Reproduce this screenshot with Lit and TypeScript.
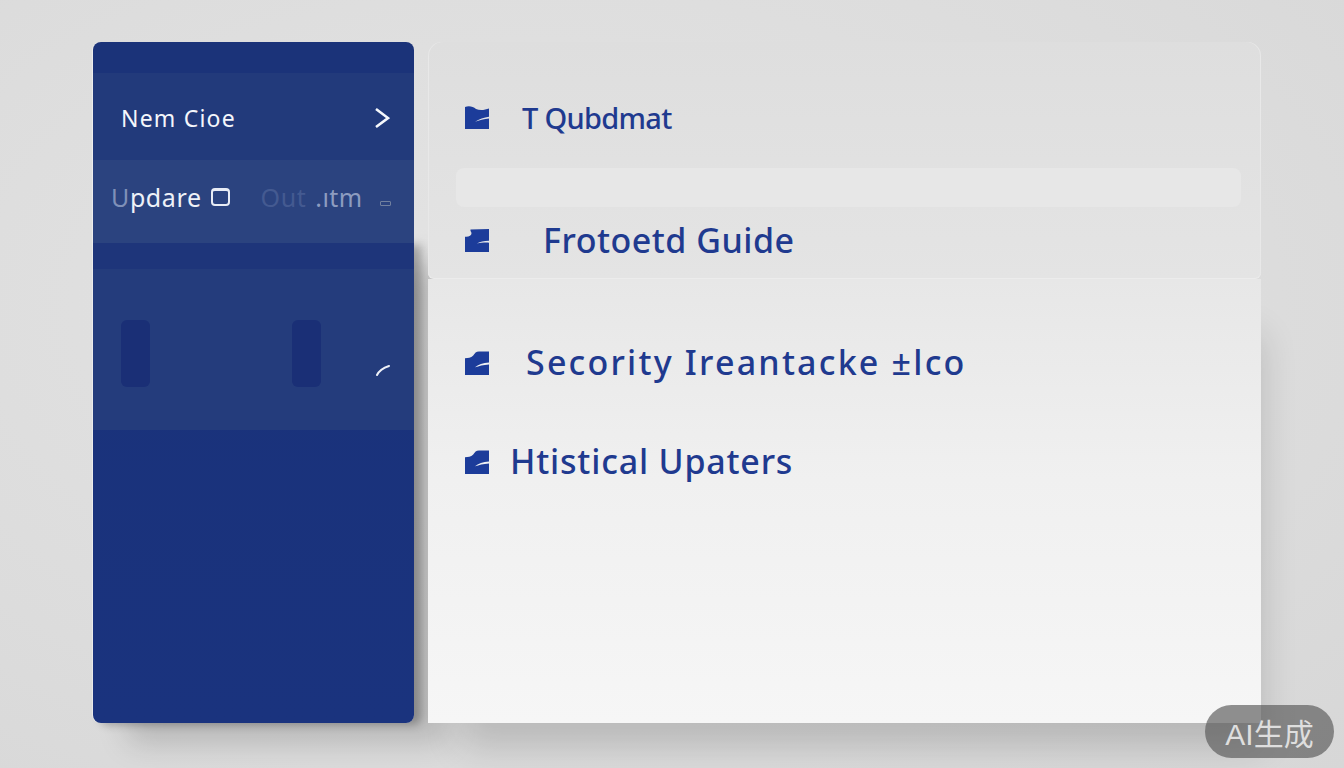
import { LitElement, html, css, svg } from 'lit';
import { customElement } from 'lit/decorators.js';

const ICONS = {
  wave: svg`<path d="M0 1C4 -.5 8 .5 11 3C15 5 20 4 24 2.500V24H0Z" fill="#1c3c9a"/><path d="M10 16.500C14 13.500 19 12 24 11.200V13C19 13.500 14 15 10 16.500Z" fill="#e2e4e8"/>`,
  notch: svg`<path d="M0 8C3.500 8.500 6.500 7 6.500 4.500C6.500 3 5 2 5.500 .5L24 0V24H0Z" fill="#1c3c9a"/><path d="M12 15C15 13 19 12.500 24 12.300V14.200C19 14 15 14.500 12 15Z" fill="#e6e8ec"/>`,
  tab: svg`<path d="M0 7.500C3 7.500 6 7 8 5C10 2 11 .5 14 .5H24V25H0Z" fill="#1c3c9a"/><path d="M10 17C13 14 18 12.500 24 12V14C18 14.500 14 15.500 10 17Z" fill="#eef0f3"/>`,
};

type IconName = keyof typeof ICONS;

@customElement('app-root')
export class AppRoot extends LitElement {
  static styles = css`
    :host {
      display: block;
      width: 1344px;
      height: 768px;
      overflow: hidden;
      font-family: 'Noto Sans', sans-serif;
    }
    .stage {
      position: relative;
      box-sizing: border-box;
      width: 1344px;
      height: 768px;
      padding: 42px 83px 45px 93px;
      display: flex;
      gap: 14px;
      background:
        radial-gradient(ellipse at 40% 40%, #e4e4e4 0%, #dcdcdc 65%, #d7d7d7 100%);
    }

    /* sidebar */
    .sidebar {
      width: 321px;
      flex: none;
      display: flex;
      flex-direction: column;
      border-radius: 8px;
      box-shadow: -1px 0 0 rgba(255, 255, 255, 0.45);
    }
    .strip-top {
      height: 31px;
      flex: none;
      border-radius: 8px 8px 0 0;
      background: #1b3379;
    }
    .menu-row {
      flex: none;
      display: flex;
      align-items: center;
      justify-content: space-between;
      box-sizing: border-box;
      position: relative;
      z-index: 1;
    }
    .row-new {
      height: 87px;
      padding: 2px 24px 0 28px;
      background: #223a7b;
      color: #f4f6fb;
      font-size: 23px;
      letter-spacing: 1.200px;
    }
    .row-update {
      height: 83px;
      padding: 0 23px 9px 18px;
      background: #2b437f;
      color: #eef1f8;
      font-size: 25px;
      letter-spacing: 0.600px;
    }
    .group {
      display: flex;
      align-items: center;
    }
    .dim {
      color: #7f90b8;
    }
    .faint {
      color: #445a91;
    }
    .mid {
      margin-left: 2px;
      color: #8d9cc0;
      letter-spacing: 0.400px;
    }
    .out {
      margin-left: 31px;
    }
    .box {
      width: 19px;
      height: 18px;
      margin-left: 9px;
      box-sizing: border-box;
      border: 2.500px solid #e8ecf5;
      border-top-width: 3px;
      border-radius: 4px;
    }
    .mini-box {
      width: 11px;
      height: 5px;
      margin: 13px 0 0 4px;
      box-sizing: border-box;
      border: 1px solid #71809f;
      border-radius: 1px;
    }
    .sidebar-lower {
      flex: 1;
      display: flex;
      flex-direction: column;
      border-radius: 0 0 8px 8px;
      background: linear-gradient(#1a327a, #1a337e);
      box-shadow:
        7px 2px 9px rgba(0, 0, 0, 0.26),
        34px 20px 30px rgba(0, 0, 0, 0.17);
    }
    .strip-mid {
      height: 26px;
      flex: none;
      background: #1e357a;
    }
    .panel {
      height: 161px;
      flex: none;
      box-sizing: border-box;
      padding: 51px 0 0 28px;
      display: flex;
      gap: 142px;
      position: relative;
      background: #243c7c;
    }
    .slot {
      width: 29px;
      height: 67px;
      border-radius: 6px;
      background: #1a2f76;
    }
    .tick {
      position: absolute;
      left: 283px;
      top: 96px;
    }

    /* main area */
    .main {
      flex: 1;
      display: flex;
      flex-direction: column;
      min-width: 0;
    }
    .top-card {
      height: 237px;
      flex: none;
      position: relative;
      z-index: 1;
      box-sizing: border-box;
      padding: 52px 20px 0 37px;
      border-radius: 14px 14px 6px 6px;
      background: linear-gradient(#dedede, #e4e4e4);
      border-bottom: 1px solid #ececec;
      box-shadow: inset -1px 0 0 #e8e8e8, inset 1px 0 0 #e8e8e8;
    }
    .lower {
      flex: 1;
      box-sizing: border-box;
      padding: 60px 20px 0 37px;
      background: linear-gradient(#e7e7e7, #f0f0f0 45%, #f6f6f6);
      box-shadow: 16px 40px 34px -16px rgba(0, 0, 0, 0.16);
    }
    .highlight {
      height: 39px;
      margin: 26px 0 10px -9px;
      border-radius: 8px;
      background: #e7e7e7;
    }
    .entry {
      display: flex;
      align-items: center;
      height: 48px;
      color: #1f3a8f;
      font-size: 34px;
      font-weight: 500;
    }
    .entry svg {
      width: 24px;
      height: 24px;
      flex: none;
    }
    .entry span {
      position: relative;
      top: -1px;
    }
    .entry.first {
      font-size: 29px;
      letter-spacing: -0.700px;
    }
    .entry.indent-first span {
      margin-left: 33px;
    }
    .entry.indent-second span {
      margin-left: 54px;
      letter-spacing: 0.500px;
    }
    .entry.indent-third span {
      margin-left: 37px;
      letter-spacing: 2.200px;
    }
    .entry.indent-fourth {
      margin-top: 51px;
    }
    .entry.indent-fourth span {
      margin-left: 21px;
      letter-spacing: 0.800px;
    }
    .badge {
      position: absolute;
      left: 1205px;
      top: 705px;
      width: 129px;
      height: 53px;
      display: flex;
      align-items: center;
      justify-content: center;
      border-radius: 27px;
      background: rgba(88, 88, 88, 0.66);
      color: #dedede;
      font-size: 30px;
      font-family: 'Liberation Sans', 'Noto Sans CJK SC', sans-serif;
    }
  `;

  private entry(icon: IconName, label: string, cls: string) {
    return html`
      <div class="entry ${cls}">
        <svg viewBox="0 0 24 25" preserveAspectRatio="none" aria-hidden="true">${ICONS[icon]}</svg>
        <span>${label}</span>
      </div>
    `;
  }

  render() {
    return html`
      <div class="stage">
        <nav class="sidebar">
          <div class="strip-top"></div>
          <div class="menu-row row-new">
            <span>Nem Cioe</span>
            <svg width="16" height="22" viewBox="0 0 16 22" fill="none" stroke="#f6f8fc" stroke-width="2.600">
              <path d="M2 2l12 9-12 9" />
            </svg>
          </div>
          <div class="menu-row row-update">
            <div class="group">
              <span><span class="dim">U</span>pdare</span>
              <span class="box"></span>
              <span class="faint out">Out</span>
              <span class="mid">&nbsp;.ıtm</span>
            </div>
            <span class="mini-box"></span>
          </div>
          <div class="sidebar-lower">
            <div class="strip-mid"></div>
            <div class="panel">
              <div class="slot"></div>
              <div class="slot"></div>
              <svg class="tick" width="14" height="12" viewBox="0 0 14 12" fill="none" stroke="#eef1f8" stroke-width="2" stroke-linecap="round">
                <path d="M1 10C3 6 7 3 13 1" />
              </svg>
            </div>
          </div>
        </nav>

        <section class="main">
          <div class="top-card">
            ${this.entry('wave', 'T Qubdmat', 'first indent-first')}
            <div class="highlight"></div>
            ${this.entry('notch', 'Frotoetd Guide', 'indent-second')}
          </div>
          <div class="lower">
            ${this.entry('tab', 'Secority Ireantacke ±lco', 'indent-third')}
            ${this.entry('tab', 'Htistical Upaters', 'indent-fourth')}
          </div>
        </section>

        <div class="badge">AI生成</div>
      </div>
    `;
  }
}
